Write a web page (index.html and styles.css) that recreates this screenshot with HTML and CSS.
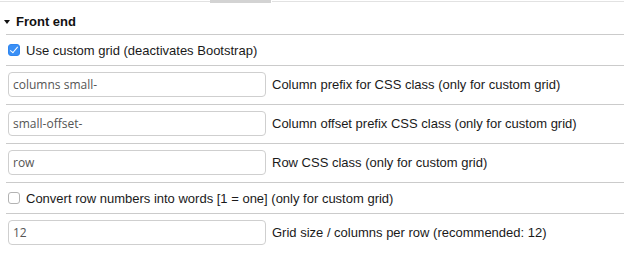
FILE: index.html
```html
<!DOCTYPE html>
<html lang="en">
<head>
    <meta charset="UTF-8" />
    <title>Grid settings</title>
    <link rel="stylesheet" href="styles.css">
</head>
<body>
<div class="tabs">
    <div class="tab-rule tab-rule-left"></div>
    <div class="tab-active"></div>
    <div class="tab-rule"></div>
</div>

<div class="section">
    <div class="section-head">
        <span class="caret"></span>
        <span class="section-title">Front end</span>
    </div>

    <div class="row row-check">
        <input type="checkbox" id="customGrid" class="check" checked />
        <label for="customGrid">Use custom grid (deactivates Bootstrap)</label>
    </div>

    <div class="row row-input">
        <input type="text" class="field" value="columns small-" />
        <label>Column prefix for CSS class (only for custom grid)</label>
    </div>

    <div class="row row-input">
        <input type="text" class="field" value="small-offset-" />
        <label>Column offset prefix CSS class (only for custom grid)</label>
    </div>

    <div class="row row-input">
        <input type="text" class="field" value="row" />
        <label>Row CSS class (only for custom grid)</label>
    </div>

    <div class="row row-check">
        <input type="checkbox" id="rowWords" class="check" />
        <label for="rowWords">Convert row numbers into words [1 = one] (only for custom grid)</label>
    </div>

    <div class="row row-input row-last">
        <input type="text" class="field" value="12" />
        <label>Grid size / columns per row (recommended: 12)</label>
    </div>
</div>
</body>
</html>
```

FILE: styles.css
```css
:root {
    --rule-color: #cbcbcb;
    --text-color: #1a1a1a;
}

body {
    font-family: "Liberation Sans", Arial, sans-serif;
    font-size: 13px;
    color: var(--text-color);
    background-color: #fff;
    margin: 0;
}

.tabs {
    display: flex;
    height: 3px;
}

.tab-rule {
    flex: 1;
    height: 1px;
    margin-top: 1px;
    background-color: #e2e2e2;
}

.tab-rule-left {
    flex: 0 0 210px;
}

.tab-active {
    width: 61px;
    margin-right: 1px;
    background-color: #d3d3d3;
}

.section {
    margin-left: 6px;
}

.section-head {
    display: flex;
    align-items: center;
    height: 25px;
    padding-top: 6px;
    border-bottom: 1px solid var(--rule-color);
}

.caret {
    width: 0;
    height: 0;
    margin-left: -2px;
    margin-right: 6px;
    margin-top: 1px;
    border-left: 3px solid transparent;
    border-right: 3px solid transparent;
    border-top: 4px solid #111;
}

.section-title {
    font-weight: bold;
    color: #111;
}

.row {
    display: flex;
    align-items: center;
    border-bottom: 1px solid var(--rule-color);
}

.row-last {
    border-bottom: none;
}

.row-check {
    height: 30px;
}

.row-input {
    align-items: flex-start;
    padding-top: 6px;
    box-sizing: border-box;
    height: 39px;
}

.row-input label {
    line-height: 25px;
}

.check {
    appearance: none;
    -webkit-appearance: none;
    box-sizing: border-box;
    width: 12px;
    height: 12px;
    margin: 0 6px 0 2px;
    border: 1px solid #b3b3b3;
    border-radius: 3px;
    background-color: #fff;
    position: relative;
}

.check:checked {
    border-color: #2f86f0;
    background-color: #3a8ff5;
}

.check:checked::after {
    content: "";
    position: absolute;
    left: 3px;
    top: 0px;
    width: 3px;
    height: 7px;
    border-right: 1.5px solid #fff;
    border-bottom: 1.5px solid #fff;
    transform: rotate(40deg);
}

.field {
    box-sizing: border-box;
    width: 258px;
    height: 25px;
    margin: 0 6px 0 2px;
    padding: 0 4px;
    border: 1px solid #cfcfcf;
    border-radius: 4px;
    font-family: "Open Sans", sans-serif;
    font-size: 12px;
    color: #555;
    outline: none;
}
```
